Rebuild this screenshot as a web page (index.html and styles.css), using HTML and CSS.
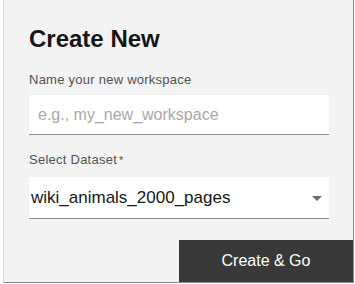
FILE: index.html
```html
<!DOCTYPE html>
<html lang="en">
<head>
    <meta charset="UTF-8">
    <meta name="viewport" content="width=device-width, initial-scale=1.0">
    <title>Create New</title>
    <link rel="stylesheet" href="styles.css">
</head>
<body>

    <div class="modal">
        <div class="modal_body">
            <p class="title">Create New</p>

            <label class="field_label" for="ws_name">Name your new workspace</label>
            <input class="text_input" id="ws_name" type="text" placeholder="e.g., my_new_workspace">

            <label class="field_label second" for="dataset">Select Dataset<span class="req">*</span></label>
            <div class="select_wrap">
                <select class="select_input" id="dataset">
                    <option>wiki_animals_2000_pages</option>
                </select>
                <span class="chevron"></span>
            </div>
        </div>

        <div class="modal_footer">
            <button class="go_button">Create &amp; Go</button>
        </div>
    </div>

</body>
</html>
```

FILE: styles.css
```css
body {
    margin: 0;
    padding: 0;
    background: #ffffff;
    font-family: "Liberation Sans", Arial, sans-serif;
}

.modal {
    margin-left: 3px;
    width: 351px;
    height: 283px;
    box-sizing: border-box;
    background: #f3f3f3;
    border-left: 1px solid #d9d9d9;
    border-right: 1px solid #8d8d8d;
    border-bottom: 1px solid #8d8d8d;
    display: flex;
    flex-direction: column;
}

.modal_body {
    display: flex;
    flex-direction: column;
    padding: 25px 24px 0 25px;
}

.title {
    margin: 0;
    font-size: 24px;
    line-height: 28px;
    font-weight: bold;
    color: #161616;
}

.field_label {
    display: block;
    margin-top: 19px;
    font-size: 13px;
    line-height: 16px;
    letter-spacing: 0.25px;
    color: #525252;
}

.field_label.second {
    margin-top: 17px;
}

.req {
    font-size: 11px;
    vertical-align: top;
    margin-left: 2px;
}

.text_input {
    margin-top: 7px;
    height: 40px;
    box-sizing: border-box;
    border: none;
    border-bottom: 1px solid #8d8d8d;
    background: #ffffff;
    padding: 0 9px;
    font-family: "Liberation Sans", Arial, sans-serif;
    font-size: 16px;
    color: #161616;
    outline: none;
}

.text_input::placeholder {
    color: #a8a8a8;
}

.select_wrap {
    position: relative;
    margin-top: 9px;
}

.select_input {
    display: block;
    width: 100%;
    height: 42px;
    box-sizing: border-box;
    appearance: none;
    -webkit-appearance: none;
    border: none;
    border-bottom: 1px solid #8d8d8d;
    border-radius: 0;
    background: #ffffff;
    padding: 0 2px;
    font-family: "Liberation Sans", Arial, sans-serif;
    font-size: 17px;
    color: #161616;
    outline: none;
}

.chevron {
    position: absolute;
    right: 7px;
    top: 19px;
    width: 0;
    height: 0;
    border-left: 5px solid transparent;
    border-right: 5px solid transparent;
    border-top: 5px solid #6f6f6f;
}

.modal_footer {
    margin-top: auto;
    display: flex;
    justify-content: flex-end;
}

.go_button {
    width: 174px;
    height: 42px;
    border: none;
    border-radius: 0;
    background: #393939;
    color: #ffffff;
    font-family: "Liberation Sans", Arial, sans-serif;
    font-size: 16px;
    cursor: pointer;
}
```
